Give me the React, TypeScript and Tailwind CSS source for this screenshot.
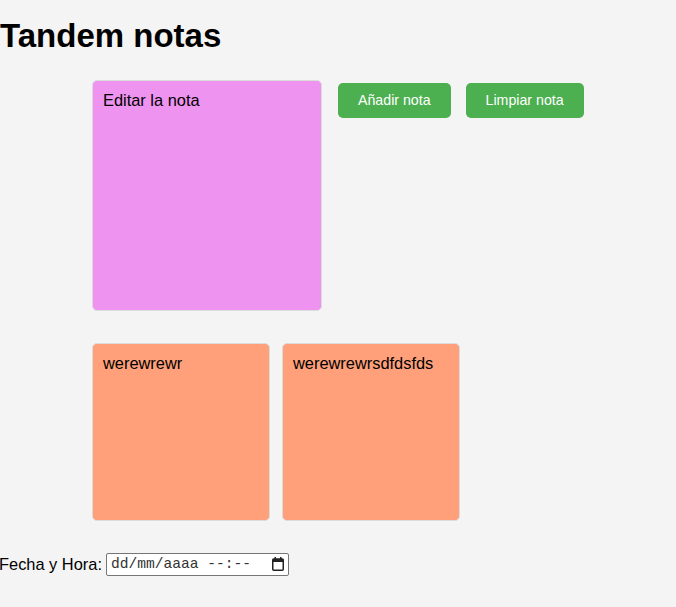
const notas = ['werewrewr', 'werewrewrsdfdsfds'];

function CalendarIcon() {
    return (
        <svg width="12" height="14" viewBox="0 0 12 14" className="text-[#222]">
            <rect x="2.5" y="0" width="1.5" height="2.5" fill="currentColor" />
            <rect x="8" y="0" width="1.5" height="2.5" fill="currentColor" />
            <rect x="0.75" y="2" width="10.5" height="11.25" rx="1" fill="none" stroke="currentColor" strokeWidth="1.5" />
            <rect x="0.75" y="2" width="10.5" height="3" fill="currentColor" />
        </svg>
    );
}

export default function App() {
    return (
        <div className="min-h-[607px] bg-[#f4f4f4] text-black font-['Liberation_Sans',Arial,sans-serif] overflow-hidden">
            <h1 className="text-[33px] font-bold leading-[37px] pt-[17px] m-0">Tandem notas</h1>

            <div className="flex items-start gap-4 ml-[92px] mt-[26px]">
                <div className="w-[230px] h-[231px] bg-[#ee93ef] border border-[#dcdcdc] rounded-[5px] p-[10px] text-[16.4px] leading-[18px]">
                    Editar la nota
                </div>
                <div className="flex gap-[15px] mt-[3px]">
                    <button className="bg-[#4caf50] text-white text-[14.2px] leading-[15px] px-5 py-[10px] rounded-[5px]">
                        Añadir nota
                    </button>
                    <button className="bg-[#4caf50] text-white text-[14.2px] leading-[15px] px-5 py-[10px] rounded-[5px]">
                        Limpiar nota
                    </button>
                </div>
            </div>

            <div className="flex gap-3 ml-[92px] mt-[32px]">
                {notas.map((n) => (
                    <div key={n} className="w-[178px] h-[178px] bg-[#ffa07a] border border-[#dcdcdc] rounded-[5px] p-[10px] text-[16.4px] leading-[18px]">
                        {n}
                    </div>
                ))}
            </div>

            <div className="flex items-center mt-[31px] text-[16.4px]">
                <span className="-ml-px mr-[4px]">Fecha y Hora:</span>
                <div className="flex items-center w-[183px] h-[23px] border border-[#767676] rounded-[2px] bg-white pl-[4px] pr-[4px]">
                    <span className="font-['Liberation_Mono',monospace] text-[14.6px] leading-[16px] text-[#333] whitespace-pre flex-1">dd/mm/aaaa --:--</span>
                    <CalendarIcon />
                </div>
            </div>
        </div>
    );
}
